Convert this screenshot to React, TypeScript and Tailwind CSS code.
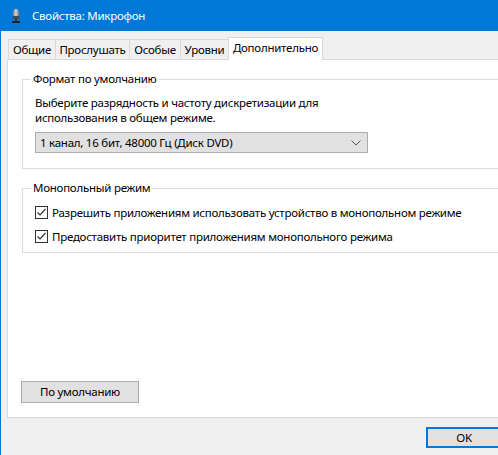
import React from "react";

const font = { fontFamily: '"Segoe UI", "Noto Sans", "Open Sans", sans-serif' };

function MicIcon() {
  return (
    <svg width="16" height="16" viewBox="0 0 16 16" className="shrink-0">
      <defs>
        <linearGradient id="cap" x1="0" x2="1" y1="0" y2="0">
          <stop offset="0" stopColor="#7a7a7a" />
          <stop offset="0.5" stopColor="#d8d8d8" />
          <stop offset="1" stopColor="#6e6e6e" />
        </linearGradient>
      </defs>
      <rect x="5" y="1" width="6" height="9" rx="3" fill="url(#cap)" />
      <rect x="5" y="8" width="6" height="3" fill="#4a4a4a" />
      <rect x="7" y="11" width="2" height="2" fill="#333" />
      <rect x="4" y="13" width="8" height="2" fill="#222" />
    </svg>
  );
}

function Check() {
  return (
    <span className="w-[13px] h-[13px] border border-[#333] bg-white flex items-center justify-center shrink-0">
      <svg width="11" height="11" viewBox="0 0 11 11">
        <path d="M1.5 5.5 L4 8 L9.5 2" fill="none" stroke="#333" strokeWidth="1.2" />
      </svg>
    </span>
  );
}

const tabs = [
  { label: "Общие", w: "w-[48px]" },
  { label: "Прослушать", w: "w-[75px]" },
  { label: "Особые", w: "w-[52px]" },
  { label: "Уровни", w: "w-[49px]" },
];

export default function App() {
  return (
    <div
      className="w-[498px] h-[455px] overflow-hidden bg-[#f0f0f0] border-l border-[#0078d7] flex flex-col text-[11.5px] tracking-[-0.25px] text-black"
      style={font}
    >
      {/* title bar */}
      <div className="h-[31px] bg-[#0078d7] flex items-center pl-[7px] gap-[8px] text-white shrink-0">
        <MicIcon />
        <span>Свойства: Микрофон</span>
      </div>

      {/* tab strip */}
      <div className="flex items-end h-[22px] mt-[6px] pl-[7px] shrink-0">
        {tabs.map((t) => (
          <div
            key={t.label}
            className={`${t.w} h-[20px] -ml-px first:ml-0 border border-b-0 border-[#d9d9d9] bg-[#f0f0f0] flex items-center justify-center`}
          >
            {t.label}
          </div>
        ))}
        <div className="w-[95px] h-[23px] -ml-px -mb-px relative z-10 border border-b-0 border-[#d9d9d9] bg-white flex items-center justify-center pb-[2px]">
          Дополнительно
        </div>
      </div>

      {/* tab page */}
      <div className="ml-[6px] w-[520px] h-[359px] border border-[#d9d9d9] bg-white flex flex-col pl-[14px] shrink-0">
        <fieldset className="mt-[11px] h-[98px] border border-[#dcdcdc] pl-[12px] pr-2">
          <legend className="px-[2px] -ml-[4px] leading-[16px]">Формат по умолчанию</legend>
          <p className="mt-[8px] leading-[15px]">
            Выберите разрядность и частоту дискретизации для
            <br />
            использования в общем режиме.
          </p>
          <div className="mt-[7px] w-[333px] h-[21px] border border-[#adadad] bg-[#e1e1e1] flex items-center justify-between pl-[4px] pr-[6px]">
            <span>1 канал, 16 бит, 48000 Гц (Диск DVD)</span>
            <svg width="10" height="6" viewBox="0 0 10 6">
              <path d="M0.5 0.5 L5 5 L9.5 0.5" fill="none" stroke="#555" strokeWidth="1" />
            </svg>
          </div>
        </fieldset>

        <fieldset className="mt-[11px] h-[73px] border border-[#dcdcdc] pl-[12px] pr-2">
          <legend className="px-[2px] -ml-[4px] leading-[16px]">Монопольный режим</legend>
          <label className="mt-[8px] flex items-center gap-[4px]">
            <Check />
            <span>Разрешить приложениям использовать устройство в монопольном режиме</span>
          </label>
          <label className="mt-[7px] flex items-center gap-[4px]">
            <Check />
            <span>Предоставить приоритет приложениям монопольного режима</span>
          </label>
        </fieldset>

        <div className="mt-auto mb-[14px] -ml-[1px]">
          <button className="w-[118px] h-[22px] border border-[#adadad] bg-[#e1e1e1] flex items-center justify-center">
            По умолчанию
          </button>
        </div>
      </div>

      {/* dialog buttons */}
      <div className="flex pl-[425px] mt-[9px]">
        <button className="w-[76px] h-[21px] border-2 border-[#0078d7] bg-[#e1e1e1] flex items-center justify-center shrink-0">
          OK
        </button>
      </div>
    </div>
  );
}
